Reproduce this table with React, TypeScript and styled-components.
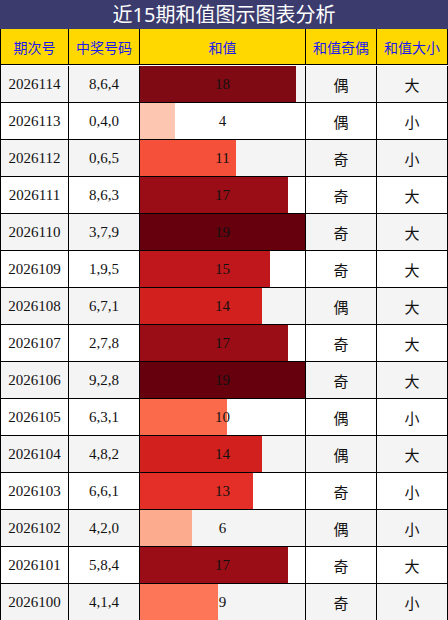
import styled, { createGlobalStyle } from 'styled-components';

interface Draw {
  issue: string;
  balls: string;
  sum: number;
  color: string;
}

const MAX_SUM = 19;

const draws: Draw[] = [
  { issue: '2026114', balls: '8,6,4', sum: 18, color: '#800a13' },
  { issue: '2026113', balls: '0,4,0', sum: 4, color: '#fdc6b0' },
  { issue: '2026112', balls: '0,6,5', sum: 11, color: '#f5503a' },
  { issue: '2026111', balls: '8,6,3', sum: 17, color: '#9a0d16' },
  { issue: '2026110', balls: '3,7,9', sum: 19, color: '#67000d' },
  { issue: '2026109', balls: '1,9,5', sum: 15, color: '#c0171d' },
  { issue: '2026108', balls: '6,7,1', sum: 14, color: '#d2201f' },
  { issue: '2026107', balls: '2,7,8', sum: 17, color: '#9a0d16' },
  { issue: '2026106', balls: '9,2,8', sum: 19, color: '#67000d' },
  { issue: '2026105', balls: '6,3,1', sum: 10, color: '#fb6a4a' },
  { issue: '2026104', balls: '4,8,2', sum: 14, color: '#d2201f' },
  { issue: '2026103', balls: '6,6,1', sum: 13, color: '#e32f27' },
  { issue: '2026102', balls: '4,2,0', sum: 6, color: '#fcab8e' },
  { issue: '2026101', balls: '5,8,4', sum: 17, color: '#9a0d16' },
  { issue: '2026100', balls: '4,1,4', sum: 9, color: '#fc7657' },
];

const GlobalStyle = createGlobalStyle`
  html, body {
    margin: 0;
    padding: 0;
    background: #ffffff;
  }
`;

const Wrap = styled.div`
  width: 448px;
  font-family: "Liberation Serif", "Noto Sans CJK SC", serif;
`;

const Title = styled.h1`
  margin: 0;
  height: 29px;
  background: #3b3b6d;
  color: #ffffff;
  font-family: "Noto Sans", "Noto Sans CJK SC", sans-serif;
  font-size: 20px;
  font-weight: 400;
  line-height: 29px;
  text-align: center;
`;

const Grid = styled.div`
  display: grid;
  grid-template-columns: 68px 71px 166px 71px 71px;
  grid-auto-rows: 37px;
  border-left: 1px solid #000;
`;

const HeadCell = styled.div`
  height: 36px;
  display: flex;
  align-items: center;
  justify-content: center;
  box-sizing: border-box;
  background: #ffd800;
  color: #1a1aee;
  border-right: 1px solid #000;
  border-bottom: 1px solid #000;
  font-family: "Noto Sans CJK SC", sans-serif;
  font-size: 14px;
`;

const Cell = styled.div<{ $alt: boolean; $cjk?: boolean }>`
  display: flex;
  align-items: center;
  justify-content: center;
  box-sizing: border-box;
  background: ${p => (p.$alt ? '#f4f4f4' : '#ffffff')};
  color: #111;
  border-right: 1px solid #000;
  border-bottom: 1px solid #000;
  font-family: ${p => (p.$cjk ? '"Noto Sans CJK SC", sans-serif' : '"Liberation Serif", serif')};
  font-size: 15px;
`;

const BarCell = styled(Cell)`
  position: relative;
  justify-content: flex-start;
`;

const Bar = styled.div`
  height: 100%;
`;

const BarValue = styled.span`
  position: absolute;
  inset: 0;
  display: flex;
  align-items: center;
  justify-content: center;
`;

const App = (): JSX.Element => (
  <Wrap>
    <GlobalStyle />
    <Title>近15期和值图示图表分析</Title>
    <Grid>
      <HeadCell>期次号</HeadCell>
      <HeadCell>中奖号码</HeadCell>
      <HeadCell>和值</HeadCell>
      <HeadCell>和值奇偶</HeadCell>
      <HeadCell>和值大小</HeadCell>

      {draws.map((d, index) => {
        const alt = index % 2 === 0;
        return [
          <Cell $alt={alt} key={`i-${d.issue}`}>{d.issue}</Cell>,
          <Cell $alt={alt} key={`b-${d.issue}`}>{d.balls}</Cell>,
          <BarCell $alt={alt} key={`s-${d.issue}`}>
            <Bar style={{ width: `${(d.sum / MAX_SUM) * 100}%`, background: d.color }} />
            <BarValue>{d.sum}</BarValue>
          </BarCell>,
          <Cell $alt={alt} $cjk key={`o-${d.issue}`}>{d.sum % 2 === 0 ? '偶' : '奇'}</Cell>,
          <Cell $alt={alt} $cjk key={`z-${d.issue}`}>{d.sum >= 14 ? '大' : '小'}</Cell>,
        ];
      })}
    </Grid>
  </Wrap>
);

export default App;
